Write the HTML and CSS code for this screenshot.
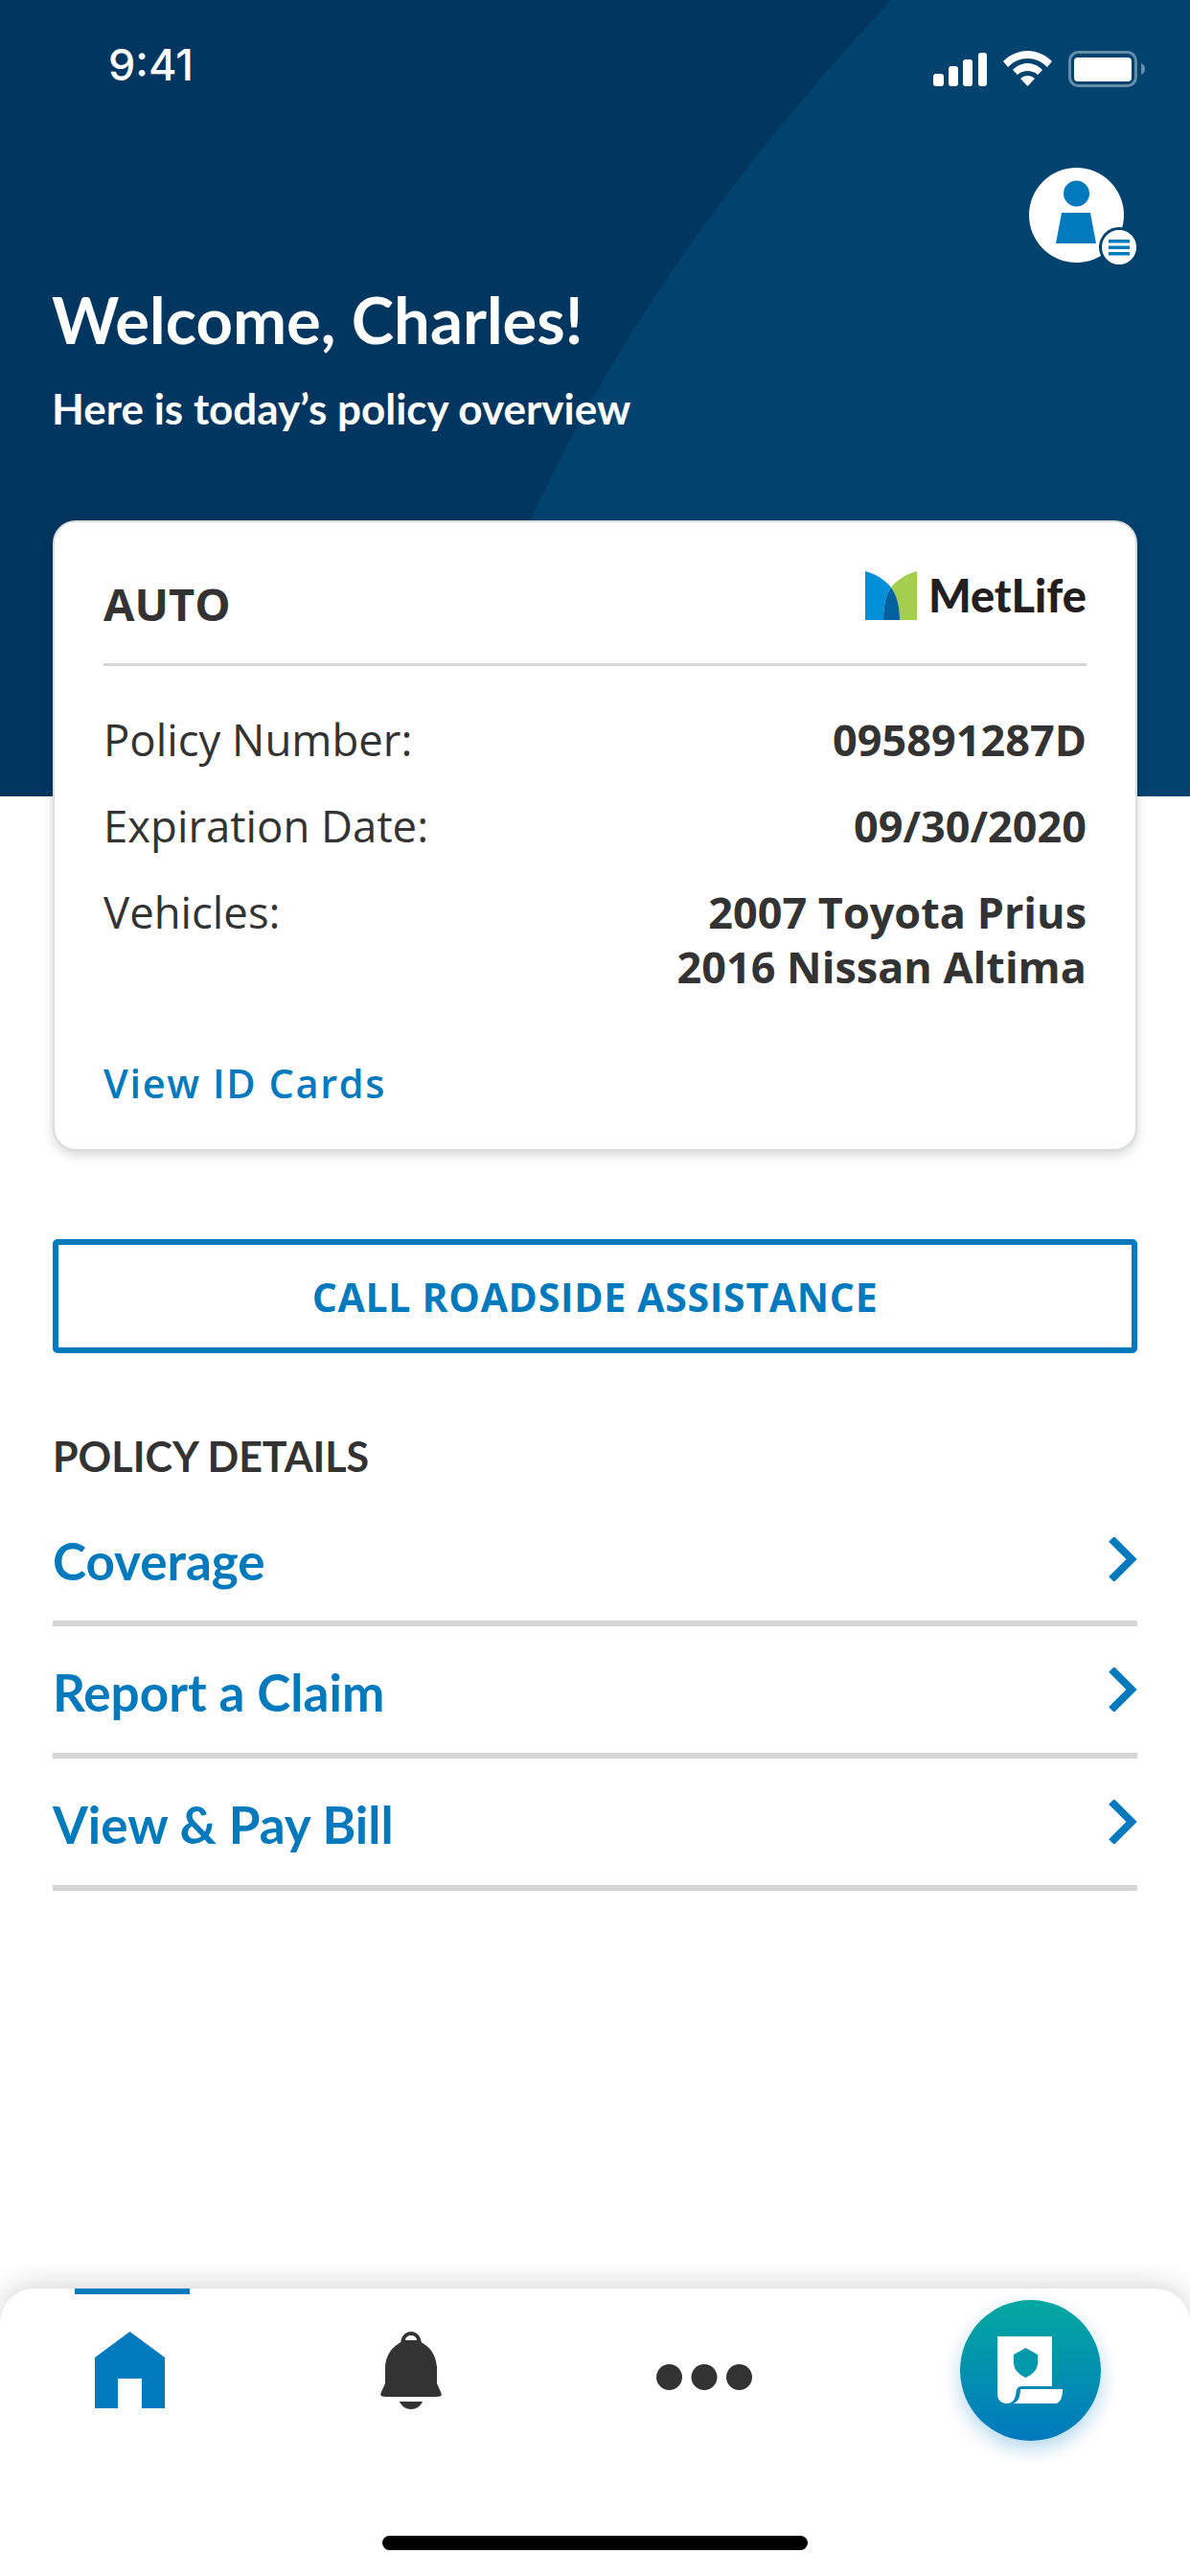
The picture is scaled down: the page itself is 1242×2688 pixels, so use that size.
FILE: index.html
```html
<!DOCTYPE html>
<html lang="en">
<head>
<meta charset="utf-8">
<title>Policy overview</title>
<link rel="stylesheet" href="styles.css">
</head>
<body>
<div class="app">
  <header class="hero">
    <svg class="hero-bg" viewBox="0 0 1242 831" preserveAspectRatio="none" aria-hidden="true">
      <path class="hero-light" d="M930 0 C790 150 650 330 554 543 L440 831 H1242 V0 Z"/>
    </svg>
    <div class="status">
      <span class="time">9:41</span>
      <div class="status-icons">
        <svg width="56" height="35" viewBox="0 0 56 35"><rect class="w" x="0" y="22" width="11" height="13" rx="3"/><rect class="w" x="16" y="14" width="10" height="21" rx="3"/><rect class="w" x="31" y="7" width="10" height="28" rx="3"/><rect class="w" x="47" y="0" width="9" height="35" rx="3"/></svg>
        <svg width="51" height="37" viewBox="0 0 51 37"><path class="w" d="M25.5 0 C35 0 44 4 51 11 L46 17 C40 11 33 8 25.5 8 C18 8 11 11 5 17 L0 11 C7 4 16 0 25.5 0Z"/><path class="w" d="M25.5 13 C31 13 36 15 41 20 L36 25 C33 22 29 21 25.5 21 C22 21 18 22 15 25 L10 20 C15 15 20 13 25.5 13Z"/><path class="w" d="M25.5 26 C28 26 31 27 33 29 L25.5 37 L18 29 C20 27 23 26 25.5 26Z"/></svg>
        <svg width="80" height="38" viewBox="0 0 80 38"><rect x="1.5" y="1.5" width="69" height="35" rx="9" fill="none" stroke="#fff" stroke-opacity=".4" stroke-width="3"/><rect class="w" x="6" y="7" width="60" height="25" rx="4"/><path d="M76 13 C79 14 80 16 80 19 C80 22 79 24 76 25Z" fill="#fff" fill-opacity=".4"/></svg>
      </div>
    </div>
    <div class="avatar-row">
      <div class="avatar">
        <svg width="99" height="99" viewBox="0 0 99 99"><circle class="b" cx="49.5" cy="27" r="13.5"/><path class="b" d="M34 47 H64 L70 79 H28Z"/></svg>
        <span class="avatar-badge">
          <svg width="22" height="17" viewBox="0 0 22 17"><rect class="b" width="22" height="3.5"/><rect class="b" y="6.5" width="22" height="3.5"/><rect class="b" y="13" width="22" height="3.5"/></svg>
        </span>
      </div>
    </div>
    <h1 class="title">Welcome, Charles!</h1>
    <p class="subtitle">Here is today’s policy overview</p>
  </header>

  <main class="content">
    <section class="card">
      <div class="card-head">
        <h2 class="card-title">AUTO</h2>
        <div class="logo">
          <svg width="54" height="51" viewBox="0 0 54 51"><path fill="#0090da" d="M0 0 C11 3 21 9 27 17 C21 25 19 37 19 51 H0Z"/><path fill="#a4ce4e" d="M54 0 C43 3 33 9 27 17 C33 25 36 37 36 51 H54Z"/><path fill="#0061a0" d="M27 17 C33 25 36 37 36 51 H19 C19 37 21 25 27 17Z"/></svg>
          <span class="logo-text">MetLife</span>
        </div>
      </div>
      <div class="facts">
        <div class="fact"><span class="fact-label">Policy Number:</span><span class="fact-value">095891287D</span></div>
        <div class="fact"><span class="fact-label">Expiration Date:</span><span class="fact-value">09/30/2020</span></div>
        <div class="fact"><span class="fact-label">Vehicles:</span><span class="fact-value">2007 Toyota Prius<br>2016 Nissan Altima</span></div>
      </div>
      <a class="card-link">View ID Cards</a>
    </section>

    <a class="outline-btn">CALL ROADSIDE ASSISTANCE</a>

    <h3 class="section-title">POLICY DETAILS</h3>
    <ul class="links">
      <li class="link-row"><span>Coverage</span><svg class="chev" width="30" height="46" viewBox="0 0 30 46"><path d="M3 2 L24 23 L3 44"/></svg></li>
      <li class="link-row"><span>Report a Claim</span><svg class="chev" width="30" height="46" viewBox="0 0 30 46"><path d="M3 2 L24 23 L3 44"/></svg></li>
      <li class="link-row"><span>View &amp; Pay Bill</span><svg class="chev" width="30" height="46" viewBox="0 0 30 46"><path d="M3 2 L24 23 L3 44"/></svg></li>
    </ul>
  </main>

  <nav class="tabbar">
    <div class="tabs">
      <div class="tab tab-home active">
        <svg width="73" height="80" viewBox="0 0 73 80"><path class="b" d="M36.5 0 L73 27 V80 H49 V49 H24 V80 H0 V27Z"/></svg>
      </div>
      <div class="tab tab-bell">
        <svg width="64" height="81" viewBox="0 0 64 81"><path class="d" d="M21 14 C21 5 26 0 32 0 C38 0 43 5 43 14Z"/><path fill="#fff" d="M26 9 C26 6 29 4 32 4 C35 4 38 6 38 9Z"/><path class="d" d="M32 9 C18 9 6 20 5 37 V54 L1 63 C-1 67 1 68 6 68 H58 C63 68 65 67 63 63 L59 54 V37 C58 20 46 9 32 9Z"/><path class="d" d="M20 73 H44 C42 78 37 81 32 81 C27 81 22 78 20 73Z"/></svg>
      </div>
      <div class="tab tab-more">
        <svg width="100" height="41" viewBox="0 0 100 41"><circle class="d" cx="13.5" cy="27.5" r="13.5"/><circle class="d" cx="50" cy="27.5" r="13.5"/><circle class="d" cx="86.5" cy="27.5" r="13.5"/></svg>
      </div>
      <div class="fab">
        <svg width="70" height="72" viewBox="0 0 70 72"><path fill="#fff" d="M0 0 H57 V52 H26 C22 52 20 54 19.5 58 C19 65 16 70 10 70 C4 70 0 66 0 60Z"/><path fill="#fff" d="M24 55 H68 C68 63 66 70 60 70 H17 C22 68 24 62 24 55Z"/><path fill="#0299aa" d="M29.5 12 L42 19 V28 C42 35 36 40 29.5 43 C23 40 17 35 17 28 V19Z"/></svg>
      </div>
    </div>
    <div class="home-bar"></div>
  </nav>
</div>
</body>
</html>
```
FILE: styles.css
```css
* { box-sizing: border-box; }
html, body { margin: 0; padding: 0; background: #fff; }
h1, h2, h3, p, ul { margin: 0; padding: 0; }
ul { list-style: none; }
svg { display: block; flex: none; }
.w { fill: #fff; }
.b { fill: #0079bd; }
.d { fill: #333; }

.app {
  width: 1242px;
  height: 2688px;
  display: flex;
  flex-direction: column;
  overflow: hidden;
  background: #fff;
  color: #333;
  font-family: "Open Sans", "Noto Sans", sans-serif;
}

/* Header */
.hero {
  position: relative;
  flex: none;
  height: 831px;
  padding: 0 55px;
  background: #013660;
  color: #fff;
}
.hero-bg { position: absolute; left: 0; top: 0; width: 1242px; height: 831px; }
.hero-light { fill: #01426f; }
.status, .avatar-row, .title, .subtitle { position: relative; }
.status {
  height: 136px;
  padding: 0 0 0 58px;
  display: flex;
  justify-content: space-between;
  margin-right: -8px;
}
.time {
  margin-top: 43px;
  font: 500 45px/50px Inter, "Liberation Sans", sans-serif;
}
.status-icons { display: flex; gap: 17px; align-items: flex-start; padding-top: 53px; }
.status-icons svg:first-child { margin-top: 2px; }
.avatar-row { display: flex; justify-content: flex-end; margin-top: 39px; padding-right: 14px; }
.avatar {
  position: relative;
  width: 99px;
  height: 99px;
  border-radius: 50%;
  background: #fff;
}
.avatar-badge {
  position: absolute;
  left: 76px;
  top: 65px;
  width: 36px;
  height: 36px;
  border-radius: 50%;
  background: #fff;
  box-shadow: 0 0 0 3px #01426f;
  display: flex;
  align-items: center;
  justify-content: center;
}
.title {
  margin-top: 21px;
  margin-left: -1px;
  font: 700 67px/76px Lato, "Noto Sans", sans-serif;
}
.subtitle {
  margin-top: 30px;
  margin-left: -1px;
  font: 700 44px/50px Lato, "Noto Sans", sans-serif;
}

/* Main */
.content {
  flex: 1;
  margin-top: -288px;
  padding: 0 55px;
  position: relative;
}
.card {
  height: 658px;
  padding: 0 51px;
  background: #fff;
  border: 2px solid #d8dde0;
  border-radius: 24px;
  box-shadow: 0 4px 12px rgba(0, 0, 0, .16);
}
.card-head {
  height: 150px;
  display: flex;
  justify-content: space-between;
  align-items: flex-start;
  border-bottom: 3px solid #d6d6d6;
}
.card-title {
  margin-top: 55px;
  font: 700 47px/60px "Open Sans", sans-serif;
}
.logo { display: flex; align-items: center; gap: 12px; margin-top: 51px; }
.logo-text { font: 900 47px/51px Lato, sans-serif; color: #231f20; }
.facts { margin-top: 0; padding-top: 48px; display: flex; flex-direction: column; gap: 33px; }
.fact {
  display: flex;
  justify-content: space-between;
  font-size: 45.5px;
  line-height: 57px;
}
.fact-value { font-size: 45px; font-weight: 700; text-align: right; }
.card-link {
  display: block;
  margin-top: 66px;
  font: 600 41.5px/54px "Open Sans", sans-serif;
  letter-spacing: 1.6px;
  color: #0079bd;
}

.outline-btn {
  display: flex;
  align-items: center;
  justify-content: center;
  height: 119px;
  margin-top: 92px;
  border: 6px solid #0079bd;
  border-radius: 5px;
  font: 700 41px/50px "Open Sans", sans-serif;
  letter-spacing: .7px;
  color: #0079bd;
}
.section-title {
  margin-top: 84px;
  font: 700 43px/48px Lato, sans-serif;
  color: #333;
}

.links { margin-top: 0; }
.link-row {
  height: 138px;
  display: flex;
  justify-content: space-between;
  align-items: center;
  border-bottom: 6px solid #d6d6d6;
  font: 700 53px/60px Lato, sans-serif;
  color: #0079bd;
}
.link-row span { padding-top: 5px; }
.link-row:first-child { height: 153px; padding-top: 18px; }
.chev { fill: none; stroke: #0079bd; stroke-width: 8; }

/* Tab bar */
.tabbar {
  flex: none;
  height: 300px;
  background: #fff;
  border-radius: 36px 36px 0 0;
  box-shadow: 0 -4px 28px rgba(0, 0, 0, .16);
  position: relative;
}
.tabs {
  height: 258px;
  padding-left: 78px;
  display: flex;
  align-items: flex-start;
}
.tab {
  width: 120px;
  height: 170px;
  display: flex;
  align-items: center;
  justify-content: center;
}
.tab.active { border-top: 6px solid #0079bd; padding: 0 6px 6px 0; }
.tab-bell { margin-left: 171px; }
.tab-more { margin-left: 186px; }
.fab {
  width: 147px;
  height: 147px;
  margin: 12px 0 0 207px;
  border-radius: 50%;
  background: linear-gradient(180deg, #04a8a0 0%, #0079bd 100%);
  box-shadow: 0 8px 20px rgba(0, 121, 189, .3);
  display: flex;
  align-items: center;
  justify-content: center;
}
.home-bar {
  width: 444px;
  height: 15px;
  margin: 0 auto;
  border-radius: 8px;
  background: #000;
}
```
